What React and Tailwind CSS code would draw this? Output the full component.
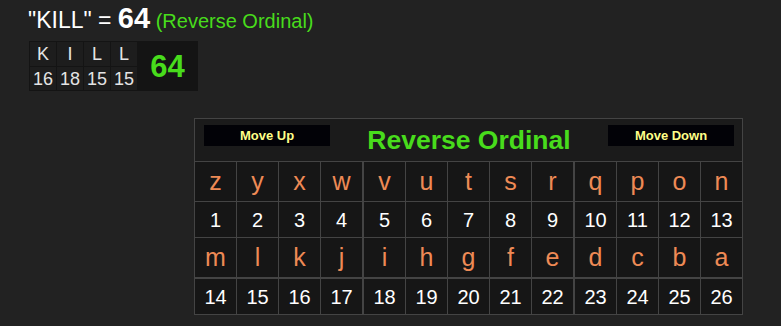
import React from "react";

const LETTERS_TOP = "zyxwvutsrqpon".split("");
const LETTERS_BOTTOM = "mlkjihgfedcba".split("");
const NUMS_TOP = Array.from({ length: 13 }, (_, i) => i + 1);
const NUMS_BOTTOM = Array.from({ length: 13 }, (_, i) => i + 14);

const WORD = [
  { ch: "K", v: 16 },
  { ch: "I", v: 18 },
  { ch: "L", v: 15 },
  { ch: "L", v: 15 },
];

function Cell({ children, col, kind, divider }) {
  // columns 5 and 10 carry a heavier left rule, the last row a heavier top rule
  const thickLeft = col === 4 || col === 9;
  const base =
    "flex items-center justify-center bg-[#161616] leading-none";
  const left = thickLeft ? " border-l border-[#444444]" : "";
  const top = divider ? " border-t border-[#444444]" : "";
  const text =
    kind === "letter"
      ? " text-[25px] text-[#ee8a55]"
      : " text-[20px] text-white";
  return <div className={base + left + top + text}>{children}</div>;
}

export default function App() {
  return (
    <div className="min-h-screen bg-[#222222] font-['Liberation_Sans',Arial,sans-serif]">
      <div className="pl-[28px] pt-[4px]">
        <div className="flex items-baseline">
          <span className="text-[23px] leading-none text-white">"KILL" =&nbsp;</span>
          <span className="text-[29px] font-bold leading-none text-white">64</span>
          <span className="text-[20px] leading-none text-[#48dc1c]">&nbsp;(Reverse Ordinal)</span>
        </div>

        <div className="mt-[8px] ml-px flex w-[169px] gap-px bg-[#141414] p-px">
          <div className="grid grid-cols-[26px_26px_26px_26px] grid-rows-[24px_23px] gap-px">
            {WORD.map((w, i) => (
              <div
                key={"c" + i}
                className="flex items-center justify-center bg-[#1d1d1d] text-[18px] leading-none text-[#e4e4e4]"
              >
                {w.ch}
              </div>
            ))}
            {WORD.map((w, i) => (
              <div
                key={"v" + i}
                className="flex items-center justify-center bg-[#1d1d1d] text-[18px] leading-none text-[#e4e4e4]"
              >
                {w.v}
              </div>
            ))}
          </div>
          <div className="flex flex-1 items-center justify-center bg-[#141414] text-[31px] font-bold leading-none text-[#48dc1c]">
            64
          </div>
        </div>
      </div>

      <div className="mt-[27px] ml-[194px] w-[549px] border border-[#444444] bg-[#444444]">
        <div className="flex h-[42px] items-start justify-between bg-[#1b1b1b] pl-[9px] pr-[8px]">
          <button className="mt-[6px] flex h-[21px] w-[126px] items-center justify-center bg-[#020207] text-[13px] font-bold leading-none text-[#ffff88]">
            Move Up
          </button>
          <div className="self-center text-[26.5px] font-bold leading-none text-[#48dc1c]">
            Reverse Ordinal
          </div>
          <button className="mt-[6px] flex h-[21px] w-[126px] items-center justify-center bg-[#020207] text-[13px] font-bold leading-none text-[#ffff88]">
            Move Down
          </button>
        </div>

        <div className="mt-px grid grid-cols-[41px_41px_41px_41px_42px_41px_41px_41px_41px_42px_41px_41px_41px] grid-rows-[39px_35px_39px_36px] gap-px">
          {LETTERS_TOP.map((l, i) => (
            <Cell key={"a" + i} col={i} kind="letter">
              {l}
            </Cell>
          ))}
          {NUMS_TOP.map((n, i) => (
            <Cell key={"b" + i} col={i} kind="num">
              {n}
            </Cell>
          ))}
          {LETTERS_BOTTOM.map((l, i) => (
            <Cell key={"c" + i} col={i} kind="letter">
              {l}
            </Cell>
          ))}
          {NUMS_BOTTOM.map((n, i) => (
            <Cell key={"d" + i} col={i} kind="num" divider>
              {n}
            </Cell>
          ))}
        </div>
      </div>
    </div>
  );
}
